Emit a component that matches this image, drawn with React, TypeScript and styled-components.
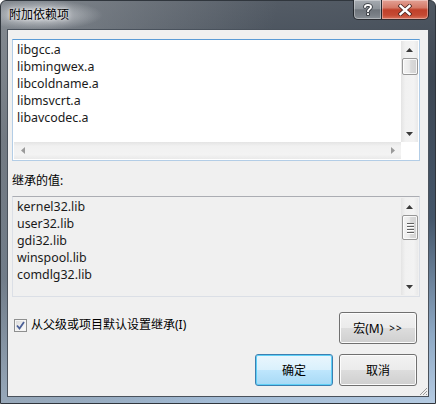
import React from 'react';
import styled, { createGlobalStyle } from 'styled-components';

const Global = createGlobalStyle`
  html, body { margin: 0; padding: 0; width: 436px; height: 404px; overflow: hidden; }
  body { font-family: "Noto Sans", "Noto Sans CJK SC", sans-serif; font-size: 12px; color: #000; }
  * { box-sizing: border-box; }
`;

const Window = styled.div`
  position: relative;
  width: 436px;
  height: 404px;
  display: flex;
  flex-direction: column;
  padding: 0 6px 6px 6px;
  border: 1px solid #30363d;
  border-radius: 6px 6px 0 0;
  background:
    radial-gradient(ellipse 62px 15px at 40px 14px, rgba(235, 237, 240, 0.75), rgba(235, 237, 240, 0) 100%),
    linear-gradient(100deg, rgba(160, 165, 170, 0.6) 0%, rgba(150, 155, 160, 0.3) 30%, rgba(0, 0, 0, 0) 55%),
    linear-gradient(172deg, #5d646d 0%, #3d4753 30%, #44566a 60%, #8ea9c5 85%, #b5cbe2 100%);
`;

const TitleBar = styled.div`
  height: 28px;
  display: flex;
  align-items: flex-start;
  margin-right: 0;
`;

const TitleText = styled.div`
  padding: 6px 0 0 2px;
  line-height: 16px;
  font-size: 12px;
  color: #000;
  text-shadow: 0 0 6px rgba(255, 255, 255, 0.9), 0 0 3px rgba(255, 255, 255, 0.8);
`;

const CaptionGroup = styled.div`
  margin-left: auto;
  display: flex;
  margin-top: -1px;
`;

const CaptionBtn = styled.div<{ $close?: boolean }>`
  width: ${p => (p.$close ? 47 : 29)}px;
  height: 20px;
  display: flex;
  align-items: center;
  justify-content: center;
  border: 1px solid rgba(20, 24, 30, 0.85);
  border-top: none;
  ${p => (p.$close ? 'border-left: none; border-bottom-right-radius: 5px;' : 'border-bottom-left-radius: 5px;')}
  box-shadow: inset 0 0 0 1px rgba(255, 255, 255, 0.35);
  background: ${p =>
    p.$close
      ? 'linear-gradient(#e3a195 0%, #d47a68 40%, #c0402a 52%, #c54a33 80%, #d9735d 100%)'
      : 'linear-gradient(#a6abb1 0%, #8e949a 45%, #6e747b 52%, #7a8087 80%, #8a9096 100%)'};
`;

const Client = styled.div`
  position: relative;
  flex: 1;
  display: flex;
  flex-direction: column;
  border: 1px solid #4a525c;
  background: #f0f0f0;
  padding: 9px 8px 0 4px;
`;

const ListBox = styled.div<{ $focused?: boolean; $hscroll?: boolean; $h: number }>`
  height: ${p => p.$h}px;
  display: grid;
  grid-template-columns: 1fr 17px;
  grid-template-rows: ${p => (p.$hscroll ? '1fr 17px' : '1fr')};
  padding: 1px;
  border: 1px solid ${p => (p.$focused ? '#b3cde6' : '#dbdfe6')};
  border-top-color: ${p => (p.$focused ? '#5b9bd5' : '#abadb3')};
  background: ${p => (p.$focused ? '#ffffff' : '#f0f0f0')};
`;

const Items = styled.div`
  overflow: hidden;
  padding: 0 0 0 3px;
`;

const Item = styled.div`
  line-height: 17px;
  height: 17px;
  font-size: 12.4px;
  white-space: nowrap;
  color: #1a1a1a;
`;

const VScroll = styled.div`
  display: flex;
  flex-direction: column;
  background: linear-gradient(to right, #e4e4e4 0%, #f1f1f1 25%, #f3f3f3 75%, #e9e9e9 100%);
`;

const HScroll = styled.div`
  display: flex;
  background: linear-gradient(to bottom, #e4e4e4 0%, #f1f1f1 25%, #f3f3f3 75%, #e9e9e9 100%);
`;

const Corner = styled.div`
  background: #ffffff;
`;

const ArrowBox = styled.div`
  width: 17px;
  height: 17px;
  flex: none;
  display: flex;
  align-items: center;
  justify-content: center;
`;

const Track = styled.div`
  flex: 1;
`;

const Thumb = styled.div<{ $h: number }>`
  height: ${p => p.$h}px;
  margin-left: 1px;
  flex: none;
  display: flex;
  flex-direction: column;
  align-items: center;
  justify-content: center;
  gap: 2px;
  border: 1px solid #979797;
  border-radius: 2px;
  box-shadow: inset 0 0 0 1px rgba(255, 255, 255, 0.8);
  background: linear-gradient(to right, #f4f4f4 0%, #eaeaea 45%, #dadada 55%, #d2d2d2 100%);
`;

const Grip = styled.div`
  width: 7px;
  height: 1px;
  background: #606060;
  box-shadow: 0 1px 0 #ffffff;
`;

const Label = styled.div`
  margin: 12px 0 7px 0;
  line-height: 16px;
  height: 16px;
`;

const OptionsRow = styled.div`
  margin-top: 15px;
  display: flex;
  align-items: flex-start;
  justify-content: space-between;
`;

const CheckRow = styled.label`
  display: flex;
  align-items: center;
  gap: 4px;
  margin: 5px 0 0 2px;
  line-height: 16px;
`;

const CheckBox = styled.span`
  width: 13px;
  height: 13px;
  display: flex;
  align-items: center;
  justify-content: center;
  border: 1px solid #8e8f8f;
  background: linear-gradient(135deg, #d6d6d6 0%, #eeeeee 50%, #fdfdfd 100%);
  box-shadow: inset 0 0 0 1px #f4f4f4;
`;

const ButtonsRow = styled.div`
  margin-top: 10px;
  display: flex;
  justify-content: flex-end;
  gap: 6px;
  margin-right: 3px;
`;

const Button = styled.div<{ $default?: boolean; $trail?: boolean }>`
  width: 78px;
  height: 32px;
  margin-right: ${p => (p.$trail ? 3 : 0)}px;
  display: flex;
  align-items: center;
  justify-content: center;
  gap: 6px;
  border: 1px solid ${p => (p.$default ? '#3c7fb1' : '#707070')};
  border-radius: 3px;
  box-shadow: inset 0 0 0 1px ${p => (p.$default ? '#5fd0f7' : '#fcfcfc')};
  background: ${p =>
    p.$default
      ? 'linear-gradient(#eaf6fd 0%, #d9f0fc 50%, #bee6fd 50%, #a7d9f5 100%)'
      : 'linear-gradient(#f2f2f2 0%, #ebebeb 50%, #dddddd 50%, #cfcfcf 100%)'};
`;

const Chevrons = styled.span`
  font-size: 10px;
  letter-spacing: 1px;
`;

const SizeGrip = styled.svg`
  position: absolute;
  right: 0;
  bottom: 0;
`;

const UpArrow = () => (
  <svg width="7" height="4" viewBox="0 0 7 4"><path d="M3.5 0 L7 4 L0 4 Z" fill="#3a3a3a" /></svg>
);
const DownArrow = () => (
  <svg width="7" height="4" viewBox="0 0 7 4"><path d="M0 0 L7 0 L3.5 4 Z" fill="#3a3a3a" /></svg>
);
const LeftArrow = () => (
  <svg width="4" height="7" viewBox="0 0 4 7"><path d="M4 0 L4 7 L0 3.5 Z" fill="#9a9a9a" /></svg>
);
const RightArrow = () => (
  <svg width="4" height="7" viewBox="0 0 4 7"><path d="M0 0 L4 3.5 L0 7 Z" fill="#9a9a9a" /></svg>
);

const topItems = ['libgcc.a', 'libmingwex.a', 'libcoldname.a', 'libmsvcrt.a', 'libavcodec.a'];
const inheritedItems = ['kernel32.lib', 'user32.lib', 'gdi32.lib', 'winspool.lib', 'comdlg32.lib'];

export default function App() {
  return (
    <>
      <Global />
      <Window>
        <TitleBar>
          <TitleText>附加依赖项</TitleText>
          <CaptionGroup>
            <CaptionBtn>
              <svg width="10" height="13" viewBox="0 0 10 13">
                <path d="M2 4 C2 1.5 8 1.2 8 4 C8 6 5 6 5 8.3" fill="none" stroke="#2b2f35" strokeWidth="3.6" strokeLinecap="round" />
                <circle cx="5" cy="11.2" r="1.9" fill="#2b2f35" />
                <path d="M2 4 C2 1.5 8 1.2 8 4 C8 6 5 6 5 8.3" fill="none" stroke="#ffffff" strokeWidth="2" strokeLinecap="round" />
                <circle cx="5" cy="11.2" r="1.1" fill="#ffffff" />
              </svg>
            </CaptionBtn>
            <CaptionBtn $close>
              <svg width="14" height="12" viewBox="0 0 14 12">
                <path d="M2.5 2 L11.5 10 M11.5 2 L2.5 10" stroke="#4a2520" strokeWidth="4" strokeLinecap="square" />
                <path d="M2.5 2 L11.5 10 M11.5 2 L2.5 10" stroke="#ffffff" strokeWidth="2.4" strokeLinecap="square" />
              </svg>
            </CaptionBtn>
          </CaptionGroup>
        </TitleBar>
        <Client>
          <ListBox $focused $hscroll $h={122}>
            <Items>
              {topItems.map(t => (
                <Item key={t}>{t}</Item>
              ))}
            </Items>
            <VScroll>
              <ArrowBox><UpArrow /></ArrowBox>
              <Thumb $h={17} />
              <Track />
              <ArrowBox><DownArrow /></ArrowBox>
            </VScroll>
            <HScroll>
              <ArrowBox><LeftArrow /></ArrowBox>
              <Track />
              <ArrowBox><RightArrow /></ArrowBox>
            </HScroll>
            <Corner />
          </ListBox>
          <Label>继承的值:</Label>
          <ListBox $h={101}>
            <Items>
              {inheritedItems.map(t => (
                <Item key={t}>{t}</Item>
              ))}
            </Items>
            <VScroll>
              <ArrowBox><UpArrow /></ArrowBox>
              <Thumb $h={25}>
                <Grip />
                <Grip />
                <Grip />
                <Grip />
              </Thumb>
              <Track />
              <ArrowBox><DownArrow /></ArrowBox>
            </VScroll>
          </ListBox>
          <OptionsRow>
            <CheckRow>
              <CheckBox>
                <svg width="9" height="9" viewBox="0 0 9 9">
                  <path d="M1 4.5 L3.5 7.5 L8 1" fill="none" stroke="#4a5f97" strokeWidth="1.8" />
                </svg>
              </CheckBox>
              从父级或项目默认设置继承(I)
            </CheckRow>
            <Button $trail>
              <span>宏(M)</span>
              <Chevrons>&gt;&gt;</Chevrons>
            </Button>
          </OptionsRow>
          <ButtonsRow>
            <Button $default>确定</Button>
            <Button>取消</Button>
          </ButtonsRow>
          <SizeGrip width="10" height="10" viewBox="0 0 10 10">
            <path d="M9 2 L2 9 M9 5 L5 9 M9 8 L8 9" stroke="#9a9a9a" strokeWidth="1" />
          </SizeGrip>
        </Client>
      </Window>
    </>
  );
}
